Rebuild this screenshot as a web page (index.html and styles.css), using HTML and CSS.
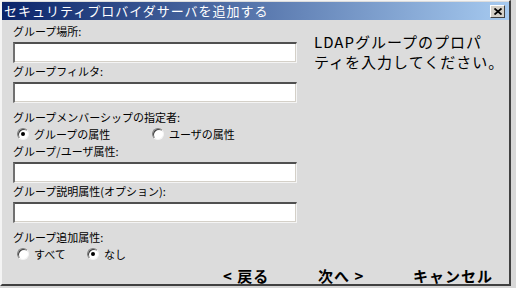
FILE: index.html
```html
<!DOCTYPE html>
<html lang="ja">
<head>
  <meta charset="UTF-8" />
  <title>セキュリティプロバイダサーバを追加する</title>
  <link rel="stylesheet" href="styles.css">
</head>
<body>
  <div class="window">
    <div class="titlebar">
      <span class="title">セキュリティプロバイダサーバを追加する</span>
      <span class="close">
        <svg width="8" height="7" viewBox="0 0 8 7"><path d="M0.5 0.5 L7.5 6.5 M7.5 0.5 L0.5 6.5" stroke="#000" stroke-width="1.8"/></svg>
      </span>
    </div>

    <div class="main">
      <div class="form">
        <div class="label">グループ場所:</div>
        <input class="field" type="text">
        <div class="label">グループフィルタ:</div>
        <input class="field" type="text">

        <div class="label gap">グループメンバーシップの指定者:</div>
        <div class="radios">
          <span class="opt wide"><span class="radio checked"></span>グループの属性</span>
          <span class="opt"><span class="radio"></span>ユーザの属性</span>
        </div>
        <div class="label">グループ/ユーザ属性:</div>
        <input class="field" type="text">
        <div class="label">グループ説明属性(オプション):</div>
        <input class="field" type="text">

        <div class="label gap">グループ追加属性:</div>
        <div class="radios">
          <span class="opt narrow"><span class="radio"></span>すべて</span>
          <span class="opt"><span class="radio checked"></span>なし</span>
        </div>
      </div>
      <p class="hint">LDAPグループのプロパ<br>ティを入力してください。</p>
    </div>

    <div class="actions">
      <span class="action">&lt; 戻る</span>
      <span class="action">次へ &gt;</span>
      <span class="action">キャンセル</span>
    </div>
  </div>
</body>
</html>
```

FILE: styles.css
```css
body {
  margin: 0;
  background: #d8d8d8;
  font-family: "Noto Sans CJK JP", "DejaVu Sans", sans-serif;
  font-size: 11px;
  color: #000;
}

.window {
  box-sizing: border-box;
  width: 511px; height: 286px;
  background: #dcdcdc;
  border-top: 1px solid #f4f4f4; border-left: 2px solid #f4f4f4;
  border-right: 2px solid #404040; border-bottom: 2px solid #404040;
  display: flex; flex-direction: column;
}

/* title bar */
.titlebar {
  height: 18px; margin-top: 1px;
  display: flex; align-items: center; justify-content: space-between;
  background: linear-gradient(to right, #0a246a, #a6caf0);
  padding: 0 4px 0 2px;
}
.title { color: #fff; font-size: 13px; letter-spacing: 1px; line-height: 18px; }
.close {
  box-sizing: border-box;
  width: 15px; height: 13px;
  display: flex; align-items: center; justify-content: center;
  background: #d4d0c8;
  border-top: 1px solid #fff; border-left: 1px solid #fff;
  border-right: 1px solid #404040; border-bottom: 1px solid #404040;
}

.main { display: flex; flex: 1; }

.form {
  width: 284px;
  padding: 4px 0 0 11px;
  display: flex; flex-direction: column;
}
.label { line-height: 14px; height: 14px; margin-bottom: 4px; }
.label.gap { margin-top: 6px; margin-bottom: 3px; }

.field {
  box-sizing: border-box;
  width: 284px; height: 21px; margin: 0 0 1px;
  padding: 0;
  background: #fff;
  border-style: solid; border-width: 2px 1px 1px 2px;
  border-color: #505050 #f4f4f4 #f4f4f4 #707070;
  box-shadow: inset 0 -1px 0 #d4d0c8, inset -1px 0 0 #d4d0c8;
}

.radios { display: flex; height: 14px; line-height: 14px; margin-bottom: 3px; padding-left: 4px; }
.opt { display: flex; align-items: center; }
.opt.wide { width: 135px; }
.opt.narrow { width: 70px; }

.radio {
  box-sizing: border-box;
  width: 12px; height: 12px; margin-right: 5px;
  border-radius: 50%;
  background: #fff;
  border: 1px solid; border-color: #808080 #f4f4f4 #f4f4f4 #808080;
  box-shadow: inset 1px 1px 0 #404040;
  position: relative;
}
.radio.checked::after {
  content: "";
  position: absolute; left: 3px; top: 3px;
  width: 4px; height: 4px; border-radius: 50%;
  background: #000;
}

.hint {
  margin: 12px 0 0 17px;
  font-size: 15px; line-height: 20px; letter-spacing: 1px;
  white-space: nowrap;
}

.actions {
  display: flex;
  padding: 0 0 0 221px;
  font-size: 15px; font-weight: bold; line-height: 16px; letter-spacing: 1px;
}
.action { width: 95px; }
```
